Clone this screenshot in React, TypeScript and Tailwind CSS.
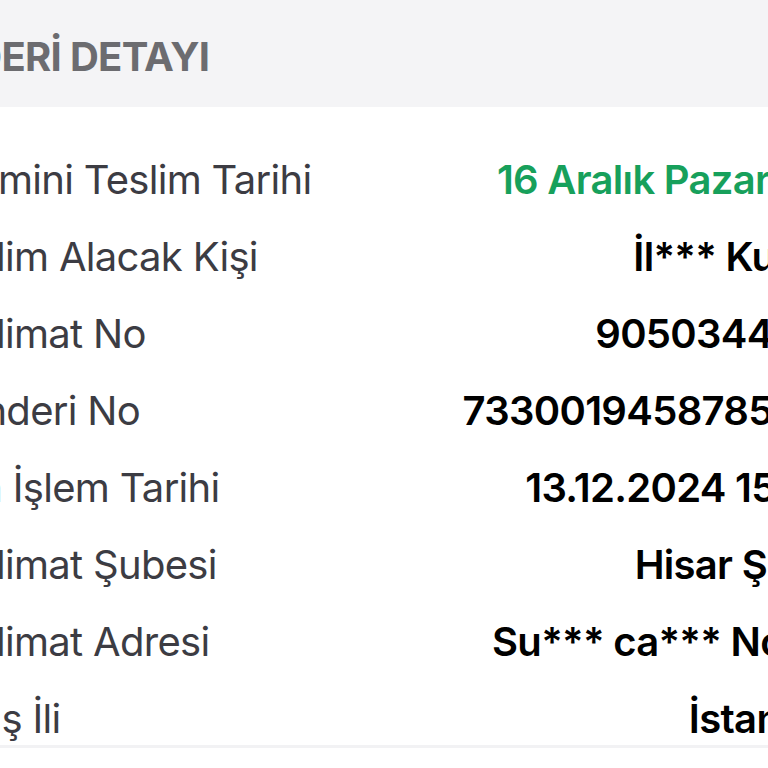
const rows: { label: string; value: string; green?: boolean }[] = [
  { label: "Tahmini Teslim Tarihi", value: "16 Aralık Pazartesi", green: true },
  { label: "Teslim Alacak Kişi", value: "İl*** Ku***" },
  { label: "Teslimat No", value: "9050344812" },
  { label: "Gönderi No", value: "7330019458785612" },
  { label: "Son İşlem Tarihi", value: "13.12.2024 15:42" },
  { label: "Teslimat Şubesi", value: "Hisar Şube" },
  { label: "Teslimat Adresi", value: "Su*** ca*** No:14" },
  { label: "Varış İli", value: "İstanbul" },
];

export default function App() {
  return (
    <div className="w-[768px] h-[768px] overflow-hidden bg-white font-['Inter',sans-serif] tracking-[-0.7px]">
      <div className="-ml-[69px] w-[907px]">
        <div className="h-[107px] bg-[#f4f4f6] flex items-center -ml-[47px]">
          <h2 className="text-[40px] leading-none font-bold text-[#6c6c70] pt-[6px]">
            GÖNDERİ DETAYI
          </h2>
        </div>
        <div className="flex flex-col gap-[37px] pt-[53px] pb-[6px] border-b-[3px] border-[#f2f2f4]">
          {rows.map((r) => (
            <div key={r.label} className="flex justify-between items-center text-[40px] leading-none">
              <span className="text-[#3c3c43]">{r.label}</span>
              <span className={r.green ? "font-semibold text-[#17a05b]" : "font-semibold text-black"}>
                {r.value}
              </span>
            </div>
          ))}
        </div>
      </div>
    </div>
  );
}
